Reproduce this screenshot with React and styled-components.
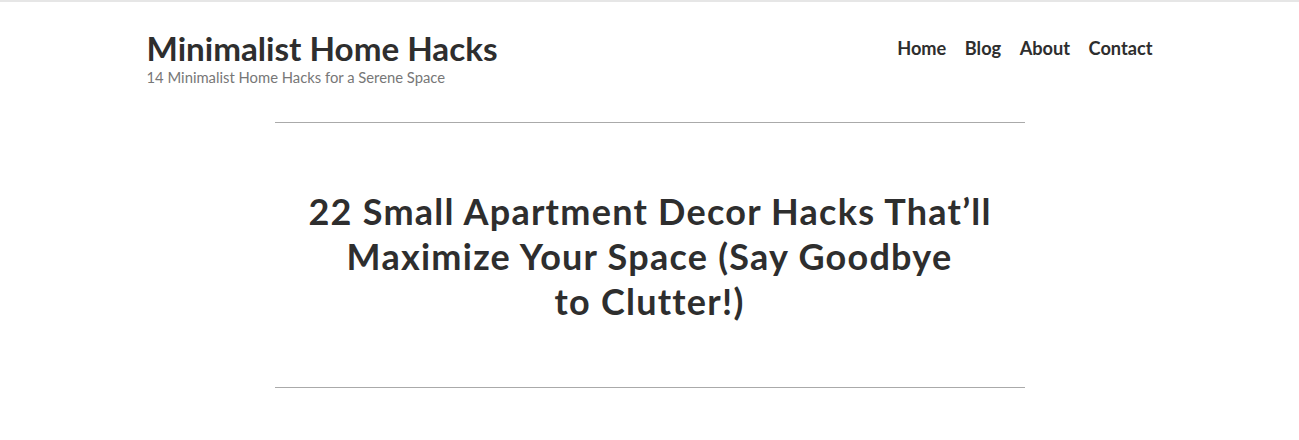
import React from 'react';
import styled, { createGlobalStyle } from 'styled-components';

const GlobalStyle = createGlobalStyle`
  html, body {
    margin: 0;
    padding: 0;
    background: #fff;
  }
  body {
    font-family: Lato, "Noto Sans", sans-serif;
    color: #333;
    border-top: 2px solid #e6e6e6;
  }
  * {
    box-sizing: border-box;
  }
`;

const Header = styled.header`
  display: flex;
  justify-content: space-between;
  align-items: flex-start;
  width: 1006px;
  margin: 0 auto;
  padding-top: 27px;
`;

const Brand = styled.div`
  display: flex;
  flex-direction: column;
`;

const SiteTitle = styled.a`
  font-size: 33.2px;
  font-weight: 700;
  line-height: 39px;
  color: #2e2e2e;
  text-decoration: none;
`;

const Tagline = styled.p`
  margin: 0;
  font-size: 14.8px;
  line-height: 18px;
  color: #777;
`;

const Nav = styled.nav`
  display: flex;
  gap: 18.5px;
  padding-top: 7px;
`;

const NavLink = styled.a`
  font-size: 18.2px;
  font-weight: 700;
  line-height: 24px;
  color: #2e2e2e;
  text-decoration: none;
`;

const Article = styled.article`
  width: 750px;
  margin: 36px auto 0;
  border-top: 1px solid #aaa;
  border-bottom: 1px solid #aaa;
  padding: 66px 0 63px;
`;

const Headline = styled.h1`
  margin: 0;
  text-align: center;
  font-size: 36px;
  font-weight: 700;
  line-height: 45px;
  letter-spacing: 1.25px;
  text-indent: 1.25px;
  color: #2e2e2e;
`;

export default function App() {
  const links = ['Home', 'Blog', 'About', 'Contact'];
  return (
    <>
      <GlobalStyle />
      <Header>
        <Brand>
          <SiteTitle href="#">Minimalist Home Hacks</SiteTitle>
          <Tagline>14 Minimalist Home Hacks for a Serene Space</Tagline>
        </Brand>
        <Nav>
          {links.map(l => (
            <NavLink key={l} href="#">
              {l}
            </NavLink>
          ))}
        </Nav>
      </Header>
      <Article>
        <Headline>
          22 Small Apartment Decor Hacks That’ll
          <br />
          Maximize Your Space (Say Goodbye
          <br />
          to Clutter!)
        </Headline>
      </Article>
    </>
  );
}
